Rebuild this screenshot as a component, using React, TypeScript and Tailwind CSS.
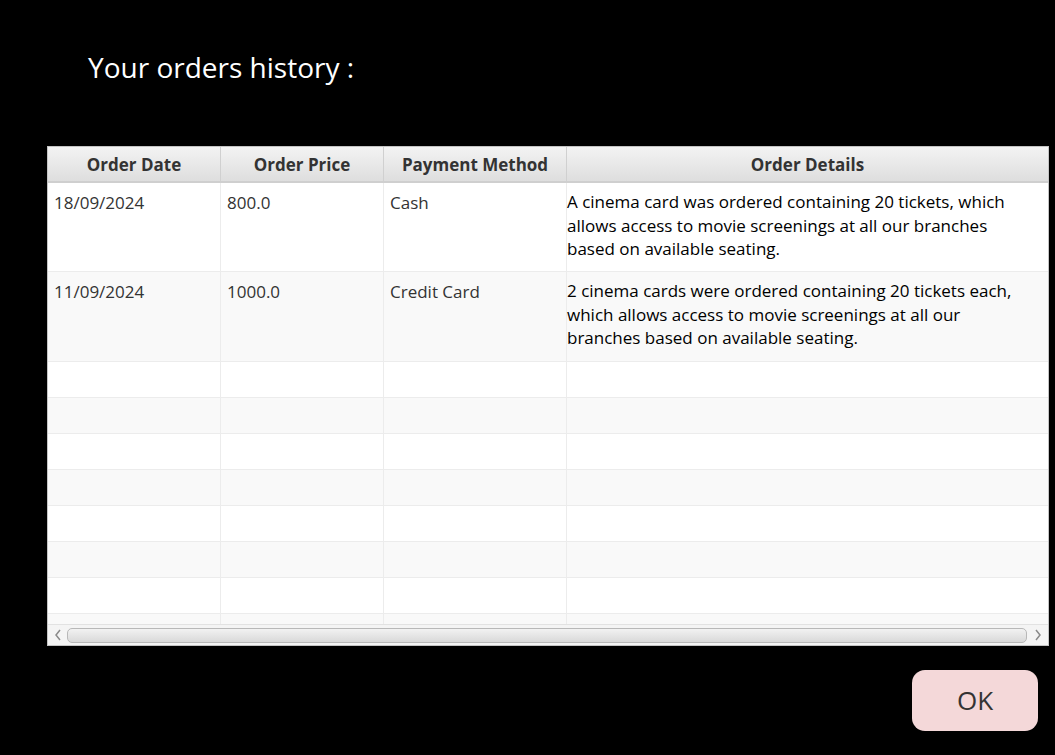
const columns = [
  { label: "Order Date", width: "w-[173px]" },
  { label: "Order Price", width: "w-[163px]" },
  { label: "Payment Method", width: "w-[183px]" },
  { label: "Order Details", width: "flex-1" },
];

const orders = [
  {
    date: "18/09/2024",
    price: "800.0",
    method: "Cash",
    height: "h-[89px]",
    details: [
      "A cinema card was ordered containing 20 tickets, which",
      "allows access to movie screenings at all our branches",
      "based on available seating.",
    ],
  },
  {
    date: "11/09/2024",
    price: "1000.0",
    method: "Credit Card",
    height: "h-[90px]",
    details: [
      "2 cinema cards were ordered containing 20 tickets each,",
      "which allows access to movie screenings at all our",
      "branches based on available seating.",
    ],
  },
];

const emptyRows = [0, 1, 2, 3, 4, 5, 6, 7];

function Cell({ className, children }: { className: string; children?: React.ReactNode }) {
  return <div className={`${className} border-r border-[#ececec] last:border-r-0`}>{children}</div>;
}

export default function App() {
  return (
    <div
      className="h-[755px] w-[1055px] bg-black overflow-hidden"
      style={{ fontFamily: '"Open Sans", "Noto Sans", sans-serif' }}
    >
      <h1 className="pl-[88px] pt-[48px] text-[28px] leading-[38px] text-white font-normal">
        Your orders history :
      </h1>

      <div className="ml-[47px] mt-[60px] w-[1002px] h-[500px] border border-[#c4c4c4] bg-white flex flex-col">
        {/* header */}
        <div className="flex h-[36px] shrink-0 bg-gradient-to-b from-[#f3f3f3] to-[#dedede] border-b-2 border-[#cfcfcf]">
          {columns.map((c) => (
            <div
              key={c.label}
              className={`${c.width} flex items-center justify-center pt-px border-r border-[#d0d0d0] last:border-r-0 text-[17px] font-bold text-[#333]`}
            >
              {c.label}
            </div>
          ))}
        </div>

        <div className="flex-1 overflow-hidden text-[17px] text-[#333]">
          {orders.map((o, i) => (
            <div
              key={o.date}
              className={`flex ${o.height} border-b border-[#ececec] ${i % 2 === 1 ? "bg-[#f9f9f9]" : "bg-white"}`}
            >
              <Cell className="w-[173px] pl-[6px] pt-[7px]">{o.date}</Cell>
              <Cell className="w-[163px] pl-[6px] pt-[7px]">{o.price}</Cell>
              <Cell className="w-[183px] pl-[6px] pt-[7px]">{o.method}</Cell>
              <Cell className="flex-1 pt-[7px] leading-[23.5px] text-black">
                {o.details.map((l) => (
                  <div key={l}>{l}</div>
                ))}
              </Cell>
            </div>
          ))}
          {emptyRows.map((r) => (
            <div
              key={r}
              className={`flex h-[36px] border-b border-[#ececec] ${r % 2 === 1 ? "bg-[#f9f9f9]" : "bg-white"}`}
            >
              <Cell className="w-[173px]" />
              <Cell className="w-[163px]" />
              <Cell className="w-[183px]" />
              <Cell className="flex-1" />
            </div>
          ))}
        </div>

        {/* horizontal scrollbar */}
        <div className="h-[21px] shrink-0 flex items-center bg-[#f4f4f4] border-t border-[#e2e2e2]">
          <div className="w-[19px] flex justify-center">
            <svg width="8" height="12" viewBox="0 0 8 12">
              <path d="M6 1 L2 6 L6 11" fill="none" stroke="#8a8a8a" strokeWidth="1.5" />
            </svg>
          </div>
          <div className="flex-1 h-[15px] rounded-[5px] border border-[#b8b8b8] bg-gradient-to-b from-[#f2f2f2] to-[#d9d9d9]" />
          <div className="w-[21px] flex justify-center">
            <svg width="8" height="12" viewBox="0 0 8 12">
              <path d="M2 1 L6 6 L2 11" fill="none" stroke="#8a8a8a" strokeWidth="1.5" />
            </svg>
          </div>
        </div>
      </div>

      <div className="flex justify-end pr-[17px] mt-[24px]">
        <button className="w-[126px] h-[61px] rounded-[13px] bg-[#f4d8d9] text-[26px] text-[#333]">
          OK
        </button>
      </div>
    </div>
  );
}
